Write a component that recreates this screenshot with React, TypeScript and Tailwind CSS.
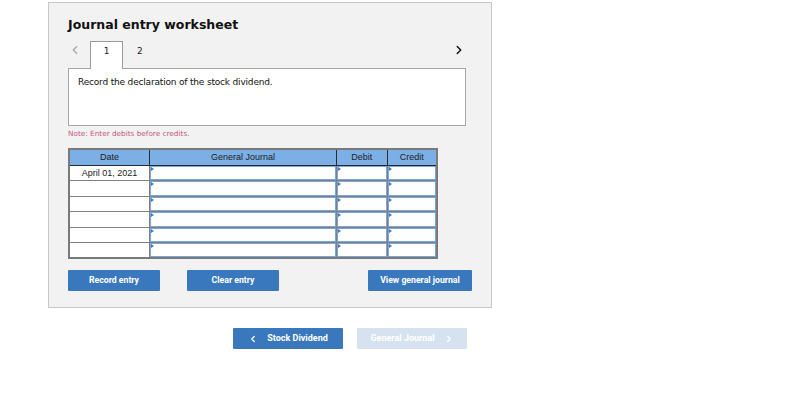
import { ChevronLeft, ChevronRight } from 'lucide-react';

const ROWS = [
  { date: 'April 01, 2021', h: 'h-[15px]' },
  { date: '', h: 'h-[16px]' },
  { date: '', h: 'h-[15px]' },
  { date: '', h: 'h-[16px]' },
  { date: '', h: 'h-[15px]' },
  { date: '', h: 'h-[15px]' },
];

function Cell({ w }: { w: string }) {
  return (
    <td className={`${w} relative border border-[#7f7f7f] p-0`}>
      <div className="absolute inset-0 border border-[#7aa6da] bg-white">
        <span className="absolute left-0 top-0 h-0 w-0 border-y-[2px] border-l-[3px] border-y-transparent border-l-[#3b78c4]" />
      </div>
    </td>
  );
}

export default function App() {
  return (
    <div className="min-h-[415px] bg-white pl-[48px] pt-[2px] font-['DejaVu_Sans',sans-serif]">
      <div className="h-[306px] w-[444px] border border-[#c8c8c8] bg-[#f2f2f2] pl-[19px] pt-[13px]">
        <h1 className="text-[12.5px] font-bold leading-[18px] text-[#111]">Journal entry worksheet</h1>

        {/* tabs */}
        <div className="mt-[7px] flex h-[28px] w-[398px] items-start">
          <ChevronLeft className="mt-[2px] h-[14px] w-[14px] text-[#9aa5b3]" strokeWidth={2} />
          <div className="relative z-10 ml-[8px] flex h-[28px] w-[33px] justify-center border border-b-0 border-[#9a9a9a] bg-white pt-[3px] text-[9px] text-[#222]">
            1
          </div>
          <div className="ml-[14px] pt-[4px] text-[9px] text-[#222]">2</div>
          <ChevronRight className="ml-auto mt-[2px] h-[14px] w-[14px] text-[#111]" strokeWidth={2.5} />
        </div>

        {/* question */}
        <div className="-mt-[1px] h-[58px] w-[398px] border border-[#a6a6a6] bg-white px-[9px] pt-[7px] text-[9px] tracking-[-0.18px] text-[#111]">
          Record the declaration of the stock dividend.
        </div>

        <p className="mt-[3px] text-[7.3px] text-[#c05a7a]">Note: Enter debits before credits.</p>

        {/* journal table */}
        <table className="mt-[8px] w-[370px] border-collapse border-2 border-[#7a7a7a] font-['Liberation_Sans',sans-serif] text-[9px] text-[#222]">
          <thead>
            <tr className="h-[17px] bg-[#7cafe6]">
              <th className="w-[81px] border border-[#2a2a2a] font-normal">Date</th>
              <th className="w-[188px] border border-[#2a2a2a] font-normal">General Journal</th>
              <th className="w-[51px] border border-[#2a2a2a] font-normal">Debit</th>
              <th className="w-[50px] border border-[#2a2a2a] font-normal">Credit</th>
            </tr>
          </thead>
          <tbody>
            {ROWS.map((r, i) => (
              <tr key={i} className={r.h}>
                <td className="border border-[#7f7f7f] bg-white p-0 text-center leading-[12px]">{r.date}</td>
                <Cell w="w-[188px]" />
                <Cell w="w-[51px]" />
                <Cell w="w-[50px]" />
              </tr>
            ))}
          </tbody>
        </table>

        {/* actions */}
        <div className="mt-[11px] flex w-[404px] font-['Roboto',sans-serif] text-[8.7px] font-bold text-white">
          <button className="h-[21px] w-[92px] rounded-[1px] bg-[#3a78bd]">Record entry</button>
          <button className="ml-[27px] h-[21px] w-[92px] rounded-[1px] bg-[#3a78bd]">Clear entry</button>
          <button className="ml-auto h-[21px] w-[104px] rounded-[1px] bg-[#3a78bd]">View general journal</button>
        </div>
      </div>

      {/* navigation */}
      <div className="ml-[185px] mt-[20px] flex gap-[14px] font-['Roboto',sans-serif] text-[9px] font-bold text-white">
        <button className="flex h-[21px] w-[110px] items-center justify-center gap-[9px] rounded-[1px] bg-[#3a78bd]">
          <ChevronLeft className="h-[10px] w-[10px]" strokeWidth={3} />
          Stock Dividend
        </button>
        <button className="flex h-[21px] w-[110px] items-center justify-center gap-[9px] rounded-[1px] bg-[#d6e2f0]">
          General Journal
          <ChevronRight className="h-[10px] w-[10px]" strokeWidth={3} />
        </button>
      </div>
    </div>
  );
}
